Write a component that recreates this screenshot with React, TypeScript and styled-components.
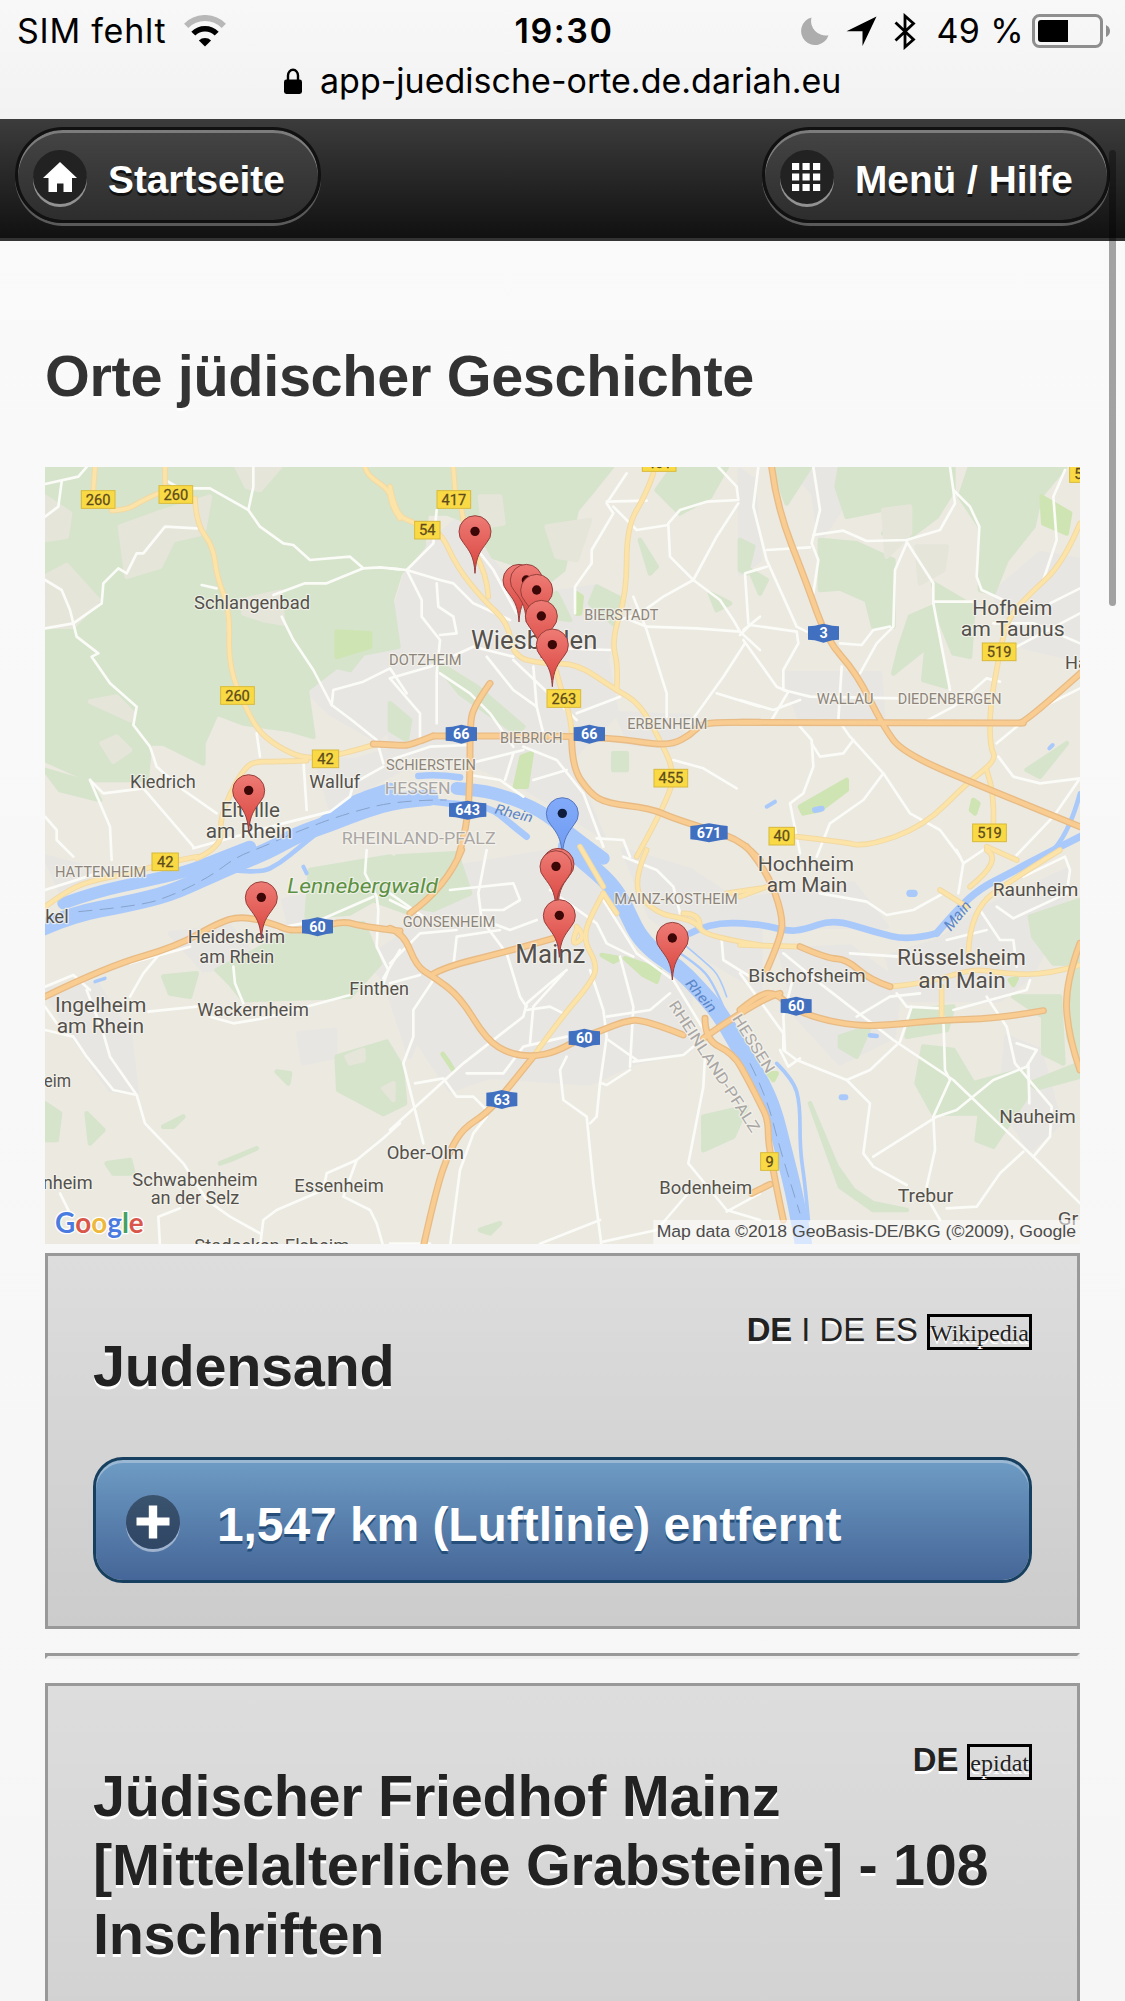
import React from 'react';
import styled, { createGlobalStyle } from 'styled-components';

const Global = createGlobalStyle`
  html, body { margin: 0; padding: 0; background: #f8f8f8; }
  * { box-sizing: border-box; }
`;

const sans = '"Liberation Sans", Arial, Helvetica, sans-serif';
const system = 'Inter, "Liberation Sans", sans-serif';

const Page = styled.div`
  position: relative;
  width: 1125px;
  height: 2001px;
  overflow: hidden;
  background: linear-gradient(#fafafa, #f6f6f6);
  font-family: ${sans};
  color: #222;
`;

/* ---------- browser chrome ---------- */

const Chrome = styled.header`
  height: 119px;
  background: linear-gradient(#f8f8f8, #f2f2f2);
  font-family: ${system};
  color: #000;
  font-size: 34px;
`;

const StatusRow = styled.div`
  display: grid;
  grid-template-columns: 1fr auto 1fr;
  align-items: center;
  height: 62px;
  padding: 0 14px 0 17px;
`;

const StatusGroup = styled.div<{ $end?: boolean }>`
  display: flex;
  align-items: center;
  justify-content: ${p => (p.$end ? 'flex-end' : 'flex-start')};
  white-space: nowrap;
`;

const StatusText = styled.span<{ $bold?: boolean; $spacing?: number; $left?: number }>`
  font-weight: ${p => (p.$bold ? 600 : 400)};
  letter-spacing: ${p => p.$spacing ?? 0}px;
  margin-left: ${p => p.$left ?? 0}px;
  line-height: 62px;
`;

const Glyph = styled.svg<{ $left?: number }>`
  display: block;
  flex: none;
  margin-left: ${p => p.$left ?? 0}px;
`;

const AddressRow = styled.div`
  display: flex;
  align-items: center;
  height: 38px;
  padding-left: 284px;
  white-space: nowrap;
`;

/* ---------- toolbar ---------- */

const Toolbar = styled.nav`
  display: flex;
  justify-content: space-between;
  height: 122px;
  padding: 8px 15px 0;
  background: linear-gradient(#3c3c3c, #111);
  background-clip: padding-box;
  border-bottom: 3px solid #333;
`;

const Pill = styled.a<{ $width: number }>`
  display: flex;
  align-items: center;
  width: ${p => p.$width}px;
  height: 96px;
  padding-left: 15px;
  border: 3px solid #111;
  border-radius: 48px;
  background: linear-gradient(#444, #2d2d2d);
  background-clip: padding-box;
  box-shadow: inset 0 3px 0 #7c7c7c, 0 3px 0 #5a5a5a;
  color: #fff;
  font-weight: bold;
  font-size: 38.8px;
  text-shadow: 0 3px 0 #111;
  white-space: nowrap;
`;

const PillLabel = styled.span`
  margin-left: 21px;
  padding-top: 9px;
`;

const Disc = styled.span<{ $blue?: boolean }>`
  display: flex;
  align-items: center;
  justify-content: center;
  flex: none;
  width: 54px;
  height: 54px;
  margin-top: 4px;
  border-radius: 50%;
  background: ${p => (p.$blue ? 'linear-gradient(#3a536e, #2f4664)' : '#222')};
  box-shadow: 0 3px 0 ${p => (p.$blue ? '#9fb2ce' : '#929292')};
`;

/* ---------- content ---------- */

const Main = styled.main`
  padding: 101px 45px 0;
`;

const Title = styled.h1`
  margin: 0 0 56px;
  font-size: 57.6px;
  line-height: 69px;
  letter-spacing: -0.32px;
  font-weight: bold;
  color: #333;
  text-shadow: 0 3px 0 #fff;
`;

const MapFrame = styled.svg`
  display: block;
  width: 1035px;
  height: 777px;
`;

const Card = styled.section<{ $height?: number }>`
  margin-top: 9px;
  height: ${p => p.$height ?? 376}px;
  padding: 0 45px;
  border: 3px solid #999;
  background: linear-gradient(#ddd, #ccc);
  background-clip: padding-box;
  text-shadow: 0 3px 0 #fff;
`;

const Rule = styled.hr`
  height: 6px;
  margin: 24px 0;
  border-style: solid;
  border-width: 3px;
  border-color: #999 #eee #eee #999;

  & + ${Card} { margin-top: 0; }
`;

const Languages = styled.div`
  float: right;
  display: flex;
  align-items: baseline;
  margin-top: 56px;
  font-size: 32.8px;
  line-height: 36px;
  white-space: pre;
`;

const Source = styled.span`
  margin-left: 9px;
  padding-top: 2px;
  border: 3px solid #000;
  font-family: "Liberation Serif", "Times New Roman", serif;
  font-size: 24px;
  line-height: 28px;
`;

const CardTitle = styled.h2`
  margin: 0;
  padding-top: 76px;
  font-size: 57.6px;
  line-height: 69px;
  letter-spacing: -0.3px;
  font-weight: bold;
`;

const Distance = styled.button`
  display: flex;
  align-items: center;
  width: 100%;
  height: 126px;
  margin: 56px 0 0;
  padding: 0 0 0 30px;
  border: 3px solid #173f5f;
  border-radius: 30px;
  background: linear-gradient(#6e9cc4, #456698);
  background-clip: padding-box;
  box-shadow: inset 0 3px 0 #9ab8d4;
  color: #fff;
  font: bold 48px/56px ${sans};
  letter-spacing: -0.08px;
  text-shadow: 0 3px 0 #254f7a;
  white-space: nowrap;
`;

const DistanceLabel = styled.span`
  margin-left: 37px;
  padding-top: 10px;
`;

const ScrollThumb = styled.div`
  position: absolute;
  top: 150px;
  left: 1109px;
  width: 7px;
  height: 456px;
  border-radius: 4px;
  background: rgba(0, 0, 0, 0.35);
`;

/* ---------- map ---------- */

/* The map is split into six sheets; every feature is placed in the units of its sheet. */
type Sheet = 'A' | 'B' | 'C' | 'D' | 'E' | 'F';
const origin: Record<Sheet, [number, number]> = {
  A: [-45, -21], B: [1035, -21], C: [2085, -21],
  D: [-45, 1149], E: [1035, 1149], F: [2085, 1149],
};
const at = (s: Sheet) => `translate(${origin[s][0]} ${origin[s][1]})`;

type Shapes = Partial<Record<Sheet, string[]>>;

const urban: Shapes = {
  A: ['830,690 930,620 1110,540 1110,780 1040,840 900,760', '860,900 980,900 1110,860 1110,930 900,1040'],
  B: ['60,300 200,180 330,330 480,400 620,380 700,420 650,600 680,760 540,900 640,1130 400,980 220,900 0,880 0,500', '680,760 900,770 850,860 720,850'],
  C: ['0,30 40,60 60,300 0,340', '150,21 290,21 300,150 240,240 220,100', '760,400 900,280 1020,300 1020,600 850,560', '130,640 420,640 430,780 180,780'],
  D: ['45,420 200,400 300,560 320,730 240,720 130,560', '420,250 600,230 700,350 520,360', '760,150 820,140 830,210 780,230', '1010,330 1110,260 1110,440', '805,550 915,540 915,620 820,640', '45,20 200,60 100,140'],
  E: ['150,60 500,0 640,130 730,310 900,420 900,600 730,640 600,700 300,680 180,720 20,480 0,300', '700,0 900,60 1110,200 1110,420 960,330 780,200', '0,440 60,380 120,460 60,620'],
  F: ['0,150 340,100 440,230 0,230', '120,300 330,290 480,400 460,560 300,640 170,500', '440,320 600,270 720,180 980,60 980,180 870,380 780,450 480,450', '800,560 900,600 960,820 870,900 780,760'],
};

const forest: Shapes = {
  A: [
    '45,21 1745,21 1690,90 1640,150 1600,330 1510,400 1480,320 1390,290 1330,190 1250,160 1190,160 1180,260 1110,340 1085,420 1105,560 1000,580 960,630 920,620 830,690 850,830 780,810 640,790 560,760 520,850 520,910 400,850 360,850 350,960 180,960 45,900',
    '45,930 180,970 210,1020 90,990',
  ],
  B: ['440,420 500,400 540,480 470,470', '850,21 1010,21 960,110 870,160 800,90', '620,380 700,420 680,500 600,430', '750,240 800,320 780,340', '130,600 260,680 400,800 380,820 210,700', '960,400 1020,430 980,450', '670,880 710,880 710,930 670,930', '0,730 60,780 50,840 0,810'],
  C: ['100,21 210,21 140,130', '300,21 640,21 640,90 590,170 510,230 430,220 480,150 420,150 320,170 290,80', '690,21 975,21 900,110 880,200 800,300 760,400 720,390 720,200 660,110', '240,240 350,250 460,300 460,500 400,500 380,420 300,385 240,390', '510,470 580,440 620,680 550,660 560,560 460,640 480,560', '580,370 700,440 690,590 640,580 600,480', '0,240 40,260 20,340 0,330', '980,850 900,950 860,930', '30,330 80,360 60,400'],
  D: ['840,60 1080,20 1250,110 1140,190 1030,150 960,190 830,200', '560,360 760,260 1000,220 1050,340 960,440 640,450 600,400', '920,620 1070,575 1115,650 1125,760 1060,792 925,720', '170,790 220,840 180,880', '230,940 300,930 310,970 250,970', '45,760 90,790 80,870 45,870', '570,940 680,895 600,930', '400,830 460,800 430,830', '400,380 500,370 480,440 420,430', '740,665 780,670 775,700'],
  E: ['20,20 200,10 240,130 130,180 20,160', '940,800 1070,770 1030,860 940,900', '270,1140 330,1120 300,1150'],
  F: ['870,200 1020,150 1020,340 940,340 880,260', '1020,330 1020,660 985,560 980,420', '520,480 640,470 620,540 500,560', '550,590 640,600 700,700 850,660 860,740 760,890 710,870 720,790 580,790 530,700', '870,700 1020,640 1020,680 890,715', '820,440 960,440 970,640 910,610 910,500', '300,560 390,530 350,620 300,590', '210,760 290,950 340,1020 400,1060 500,1080 400,1080 300,1010'],
};

const clearing: Shapes = {
  A: ['270,200 380,160 540,110 520,220 430,240 390,320 290,350', '45,350 110,315 205,420 130,500 45,500', '45,110 120,160 110,230 45,240', '620,21 750,21 690,90 650,80', '640,420 750,395 760,490 700,480 640,460', '215,850 260,830 300,870 250,905', '180,725 260,710 310,760 300,780'],
  B: ['270,110 330,110 340,190 280,200', '470,200 600,180 560,300 500,290'],
  C: ['430,150 510,140 510,220 440,290', '530,260 620,260 610,330 540,370'],
  D: ['950,620 1000,600 1000,630 960,640', '1060,715 1090,700 1090,750'],
};

const park: Shapes = {
  A: ['920,515 1020,520 1020,560 920,590'],
  B: ['395,890 425,880 410,980 375,980', '560,400 575,410 570,460 558,460'],
  C: ['905,110 990,160 980,220 910,190', '180,1040 320,960 320,990 240,1050 190,1060', '700,1020 715,1030 705,1060 693,1050'],
  E: ['705,325 810,360 800,395 760,375', '635,315 690,325 670,335', '158,612 175,635 190,660'],
  F: ['85,670 110,670 100,690', '810,390 830,385 820,405'],
};

const water: [Sheet, number, string][] = [
  ['D', 50, '20,240 120,195 300,160 420,130 520,85 600,50 720,0 800,-45 900,-80 1000,-120 1110,-152 1200,-158'],
  ['D', 36, '100,160 200,125 340,95 470,65 570,25 660,-10'],
  ['D', 14, '600,60 690,70 750,40 810,-10 860,-50'],
  ['A', 34, '850,1110 930,1045 1000,1010 1080,985'],
  ['B', 20, '85,948 140,942 210,952'],
  ['B', 20, '-20,1020 90,1020 170,1030 300,1040 360,1090 410,1130'],
  ['B', 38, '200,985 270,990 350,1010 450,1050 540,1120 640,1195'],
  ['E', 52, '530,-10 590,40 660,100 705,170 740,250 790,305 860,350 920,410 990,490 1040,580 1110,690 1150,780 1180,900 1220,1060 1240,1180'],
  ['E', 20, '900,250 960,217 1110,222 1190,243 1240,240 1330,208 1450,245 1560,272 1640,250'],
  ['F', 22, '590,250 650,180 720,115 800,75 930,5 1020,-40'],
  ['C', 14, '930,1180 985,1130 1020,1000'],
  ['E', 7, '870,310 930,350 970,400 1000,470'],
  ['E', 5, '890,290 950,340 990,380 1010,440'],
  ['F', 11, '110,640 160,690 180,760 180,900 195,1000 205,1110'],
  ['C', 12, '80,1040 105,1025'], ['C', 18, '225,1050 245,1046'], ['C', 12, '928,865 938,855'],
  ['F', 22, '510,130 522,130'], ['F', 18, '305,742 316,742'], ['F', 14, '390,556 410,558'],
  ['D', 10, '195,395 225,385'], ['D', 12, '820,50 830,70'],
];

const riverBorder: [Sheet, string][] = [
  ['D', '145,185 330,168 430,135 540,80 620,20 700,-10 800,-55 950,-110 1110,-150 1250,-150'],
  ['F', '30,640 80,740 120,900 180,1090'],
];

const minor: Shapes = {
  A: [
    '45,72 145,50 170,21', '95,65 85,140 45,170', '405,60 450,85 540,85 655,150 690,200 760,250 790,255 840,300 960,290 1000,325 1050,322 1110,328', '670,21 670,80 655,150',
    '500,205 405,200 340,280 320,280 290,340 265,325 220,370 215,430 130,490 45,505', '45,360 95,390 120,450 140,530 205,580 185,590 240,670 320,740 310,795 360,860 380,920 460,990 560,1060',
    '1000,325 890,370 825,370 730,405', '755,470 790,540 850,630 905,735 910,690 1000,665 1080,625 1130,700', '905,735 965,780 1040,840 1060,910', '180,960 220,1000 340,985 490,1160',
    '180,960 240,1100 245,1200', '45,1070 80,1110 80,1140 130,1190', '680,820 690,890', '820,900 830,1050', '490,1165 760,1090 900,1055 960,1010 970,970 1060,920', '590,450 595,520', '515,375 560,385',
  ],
  B: [
    '0,325 50,330 150,360 190,370 250,430 360,480', '50,330 130,250 140,150', '50,330 95,420 95,470 150,540 140,640 140,790', '140,370 145,440 190,470 200,520 150,525', '240,240 310,330 380,460',
    '710,40 650,130 670,160 605,270 605,310 555,380 555,460', '650,125 770,122', '670,140 740,210 835,195 840,290 910,360 990,420 1030,480 1050,515', '835,190 870,150 950,125 1045,120 1040,80 985,21', '1045,130 980,230 910,360 820,410 750,460 690,480',
    '730,410 770,510 830,700 830,770', '720,480 770,500 920,505 1050,515 1110,570', '1060,510 1110,470', '1065,550 1000,650 900,790', '980,700 1110,740', '370,590 250,560 120,620 0,655', '370,600 560,780', '290,590 370,690 440,740',
    '430,620 440,740 460,820', '690,710 560,760', '0,655 90,760 90,850', '850,900 940,925 1040,985', '400,860 500,900 580,1000 640,1160', '620,1135 700,1140 720,1190', '240,945 330,960 400,1010', '345,960 370,880', '430,960 530,930',
    '0,900 120,860 240,855', '240,910 400,870', '150,640 240,700 300,760 370,860', '370,560 660,570',
  ],
  C: [
    '55,21 40,140 80,300 170,500 200,515', '220,21 240,150 215,250 235,300 220,400', '80,270 210,262', '220,225 310,212 380,243 500,240 600,210 645,130 640,90 630,21', '640,90 690,140 718,200 710,350 725,390 790,420', '500,245 580,370 580,430 605,560 630,690',
    '500,250 465,330 460,500 410,550 360,640', '580,425 700,425', '975,30 940,110 950,240 910,360', '1020,385 930,430', '80,320 15,340 25,490', '0,525 30,495 170,515 175,550 130,630 130,690 210,710 480,715', '10,540 110,680 145,695 95,780', '0,720 100,750 180,720',
    '300,550 365,555 400,510 450,500', '305,620 295,780 330,830 430,940 510,1060 600,1110 660,1190', '180,800 215,840 220,920 190,1000 150,1030 180,1180', '215,850 240,890 310,880 340,840', '430,940 370,1020 270,1090 230,1190', '555,785 640,740 700,690 740,655 780,665',
    '770,850 830,800 930,730 1020,685', '775,890 820,950 900,970 1020,955 940,1070 830,1185', '1020,550 880,490 760,490', '1020,460 830,560',
  ],
  D: [
    '45,540 130,560 170,620 250,720 320,735 345,820 460,940 530,1050 600,1100 690,1150', '170,420 220,550 240,620 320,735', '45,410 130,375 180,420', '355,485 500,470', '390,310 340,370 300,440', '610,350 615,400 640,460', '540,500 610,520 700,505 960,435',
    '1010,0 1005,70 1040,140 1045,180 1040,290 1075,360 1060,400', '1030,140 870,210 740,235', '480,290 300,340', '1110,300 1060,385', '1110,820 1060,865 980,930 890,970 880,1020 740,1080 700,1110 690,1190', '980,930 940,1040 1020,1080 1040,1120 1060,1190', '450,1075 385,1100 390,1190', '90,1030 120,1090', '45,470 80,520', '45,120 140,90 200,70',
  ],
  E: [
    '0,400 90,375', '0,340 90,250 200,240', '130,390 70,480 70,560 40,640 100,880', '0,840 220,640 400,500 410,460 480,400 530,360', '410,480 480,470 520,490', '290,0 265,130 275,210 350,310 390,440 410,470', '180,120 370,100 390,150 340,180 275,180', '0,150 60,180',
    '600,360 640,480 650,560 630,700 620,800 600,820', '690,320 730,470 720,650', '530,620 510,660 520,750 590,800 610,1000 635,1190', '730,635 880,615 910,590', '635,700 650,705 720,660', '655,570 740,630', '945,620 940,710 895,940 1010,1080 1110,1110',
    '1010,1085 1110,1030', '640,1175 800,1140 890,1035', '75,700 160,685 200,740 250,740 290,780', '230,670 340,670 400,590 530,560', '290,800 250,850 210,960 180,1190', '450,1181 630,1110', '640,150 740,310 850,390 960,570', '700,20 800,60 850,110 870,190', '995,270 1000,330 1080,380',
    '480,120 620,220 650,280 730,320', '280,210 360,240 440,210', '190,350 200,260 330,240', '420,580 430,470 520,370', '650,500 780,480 840,430', '0,130 100,200', '120,1181 0,1181',
  ],
  F: [
    '130,310 240,400 460,570 640,690 880,920 1020,1060', '0,370 130,550 130,600 170,630 320,690 390,760 370,910 400,950 500,1005', '120,600 145,650 180,625', '320,690 390,660 480,575 515,470', '240,130 380,155 440,195 520,180 610,130', '650,0 670,40 655,130', '670,40 730,0',
    '740,440 800,530 825,640 935,770 930,860 880,920', '610,500 615,660 630,690 580,800 585,900 560,1010', '400,920 590,800 650,780 760,690 860,650 890,600 830,580', '865,640 868,760', '850,905 780,970 710,1070 620,1075', '560,1040 600,1110', '330,310 480,320', '350,500 450,440 540,430',
    '470,430 500,470 600,475', '720,180 780,270 820,270 830,350', '770,170 820,205 980,130 990,60 975,20 850,80', '620,270 740,240', '640,480 860,420 870,390', '160,380 130,500 135,600',
  ],
};

const yellow: Shapes = {
  A: ['195,21 190,90', '245,152 290,150 340,120 385,100', '405,21 405,70', '495,115 498,190 550,260 560,350 600,450 595,620 650,750 690,820 760,870 830,897 930,885 1030,855', '830,902 740,905 670,905 640,930 600,1000 570,1080 575,1160 500,1195', '1005,21 1010,45 1080,90 1085,140 1110,175'],
  B: ['0,80 15,160 70,190 150,210 200,320 280,420 355,490 370,590 460,612 560,610 670,685 750,730 820,860 850,930 840,1010 740,1190', '190,21 195,90', '215,150 225,230 290,340 295,410', '790,40 770,100 710,200 710,400 665,540 685,620 680,690', '490,600 510,680 545,780 545,830'],
  C: ['1020,190 970,310 860,410 800,480 775,600 750,740 750,860 770,900 680,970 550,1100 380,1160 300,1145 170,1130', '740,930 765,1000 760,1100', '740,1160 830,1200'],
  D: ['500,20 420,35 300,70 170,95 100,130 45,170'],
  E: ['770,0 720,110 800,190 880,205 920,220 950,260 1110,285', '640,130 600,200 580,270 620,340 610,390 500,520 430,620', '570,-10 640,110', '640,130 680,190', '560,230 590,260 540,290 560,240', '1010,130 1110,115', '880,190 930,190 930,230'],
  F: ['0,285 180,290', '450,410 560,400 700,355 780,370 920,375 1020,345', '605,410 605,510', '685,310 690,180 830,80 960,0', '600,120 680,170', '690,110 790,30 740,0', '0,140 80,110'],
};

const motorway: Shapes = {
  A: ['1030,852 1110,856 1140,856 1210,828'],
  B: ['130,828 240,828 550,828 700,838 790,852 850,852 900,825 930,795 980,786 1110,787', '300,670 250,740 240,800 240,950 232,1100 205,1190', '545,830 545,920 600,1000 650,1030 780,1045 850,1075 960,1110 1060,1145 1110,1200'],
  C: ['0,787 850,789', '840,789 862,782 1030,632', '95,21 110,140 200,370 260,540 350,640 430,800 490,880 750,990 1020,1100'],
  D: ['45,440 230,350 440,290 580,210 650,200 740,225 780,243 860,235 940,213 1000,230 1110,243'],
  E: ['215,0 170,110 60,190', '0,235 40,250 80,350 130,380 210,440 290,570 360,612 430,620 500,605 580,560 640,540 700,515 760,507 880,555', '125,375 160,352 350,305 490,265', '430,620 350,720 290,790 220,835 180,900 140,1010 100,1190', '945,505 945,570 1030,610 1075,690 1110,760 1135,810 1135,900 1180,1110', '940,565 1110,445 1170,430', '1085,1030 1140,1003'],
  F: ['0,480 60,430 110,430 150,470 230,505 350,528 450,525 600,510 780,505 910,482', '20,-10 80,60 130,200 120,270 80,360', '1020,280 975,400 985,560 1020,660', '180,290 260,325 320,328 390,390 450,410'],
};

type Kind = 'town' | 'district' | 'state' | 'river' | 'forest';
const kinds: Record<Kind, { fill: string; italic?: boolean }> = {
  town: { fill: '#54514d' },
  district: { fill: '#8d857a' },
  state: { fill: '#a9a6a4' },
  river: { fill: '#5b86c8', italic: true },
  forest: { fill: '#5c9143', italic: true },
};

/* sheet, text, left, baseline, width, size, kind, rotation */
const labels: [Sheet, string, number, number, number, number, Kind, number?][] = [
  ['A', 'Schlangenbad', 492, 448, 348, 56, 'town'], ['A', 'Kiedrich', 300, 983, 197, 56, 'town'], ['A', 'Walluf', 838, 983, 152, 56, 'town'],
  ['A', 'Eltville', 572, 1072, 178, 60, 'town'], ['A', 'am Rhein', 527, 1134, 260, 58, 'town'], ['A', 'RHEINLAND-PFALZ', 935, 1152, 462, 48, 'state'],
  ['B', 'Wiesbaden', 243, 567, 379, 76, 'town'], ['B', 'BIERSTADT', 583, 479, 222, 44, 'district'], ['B', 'DOTZHEIM', -3, 615, 218, 44, 'district'],
  ['B', 'BIEBRICH', 330, 848, 188, 44, 'district'], ['B', 'ERBENHEIM', 712, 808, 240, 44, 'district'], ['B', 'SCHIERSTEIN', -12, 930, 270, 44, 'district'],
  ['B', 'HESSEN', -16, 1001, 198, 48, 'state'], ['B', 'Rhein', 312, 1060, 116, 42, 'river', 14],
  ['C', 'Hofheim', 697, 464, 240, 60, 'town'], ['C', 'am Taunus', 662, 528, 312, 60, 'town'], ['C', 'WALLAU', 230, 733, 170, 44, 'district'],
  ['C', 'DIEDENBERGEN', 473, 731, 312, 44, 'district'], ['C', 'Hattersheim', 975, 628, 300, 56, 'town'],
  ['D', 'HATTENHEIM', 75, 80, 274, 44, 'district'], ['D', 'Winkel', -48, 220, 164, 54, 'town'], ['D', 'Lennebergwald', 772, 128, 452, 62, 'forest'],
  ['D', 'Heidesheim', 473, 280, 292, 54, 'town'], ['D', 'am Rhein', 508, 338, 225, 54, 'town'], ['D', 'Ingelheim', 75, 486, 274, 62, 'town'], ['D', 'am Rhein', 80, 549, 262, 60, 'town'],
  ['D', 'Finthen', 958, 434, 179, 56, 'town'], ['D', 'Wackernheim', 502, 498, 335, 56, 'town'], ['D', 'heim', 15, 711, 108, 56, 'town'], ['D', 'nheim', 38, 1017, 150, 56, 'town'],
  ['D', 'Schwabenheim', 307, 1007, 376, 56, 'town'], ['D', 'an der Selz', 362, 1061, 266, 56, 'town'], ['D', 'Essenheim', 793, 1026, 268, 56, 'town'], ['D', 'Stadecken-Elsheim', 493, 1205, 465, 56, 'town'],
  ['E', 'GONSENHEIM', 38, 232, 278, 44, 'district'], ['E', 'Mainz', 376, 338, 210, 76, 'town'], ['E', 'MAINZ-KOSTHEIM', 673, 163, 370, 44, 'district'],
  ['E', 'Ober-Olm', -10, 928, 232, 56, 'town'], ['E', 'Bodenheim', 808, 1032, 278, 56, 'town'], ['E', 'Rhein', 884, 402, 118, 42, 'river', 49],
  ['E', 'RHEINLAND-PFALZ', 835, 465, 460, 46, 'state', 57], ['E', 'HESSEN', 1025, 505, 198, 46, 'state', 58],
  ['F', 'Hochheim', 53, 63, 289, 62, 'town'], ['F', 'am Main', 80, 125, 242, 60, 'town'], ['F', 'Raunheim', 758, 138, 257, 56, 'town'], ['F', 'Rüsselsheim', 471, 346, 387, 64, 'town'],
  ['F', 'am Main', 535, 415, 262, 64, 'town'], ['F', 'Bischofsheim', 25, 395, 352, 56, 'town'], ['F', 'Nauheim', 778, 820, 229, 56, 'town'], ['F', 'Trebur', 473, 1057, 167, 56, 'town'],
  ['F', 'Gr', 953, 1124, 62, 56, 'town'], ['F', 'Main', 632, 245, 100, 46, 'river', -50],
];

/* sheet, text, left, top, width */
const federal: [Sheet, string, number, number, number][] = [
  ['A', '260', 152, 90, 105], ['A', '260', 385, 75, 105], ['A', '260', 570, 678, 105], ['A', '42', 845, 868, 83], ['D', '42', 364, 7, 83],
  ['B', '417', 139, 90, 105], ['B', '54', 72, 182, 80], ['B', '263', 469, 687, 105], ['B', '455', 790, 926, 105], ['B', '461', 755, -21, 105],
  ['C', '519', 725, 547, 105], ['C', '519', 696, 1090, 105], ['C', '40', 85, 1100, 80], ['C', '519', 987, 12, 105], ['F', '9', 60, 906, 57],
];
const autobahn: [Sheet, string, number, number, number][] = [
  ['B', '66', 167, 794, 94], ['B', '66', 551, 794, 94], ['B', '643', 177, 1022, 112], ['B', '671', 901, 1090, 112], ['C', '3', 204, 491, 93],
  ['D', '60', 816, 202, 93], ['E', '60', 536, 536, 94], ['E', '63', 289, 720, 93], ['F', '60', 122, 440, 93],
];

/* sheet, head centre x, head centre y, blue */
const pins: [Sheet, number, number, boolean?][] = [
  ['B', 255, 214], ['B', 387, 360], ['B', 409, 360], ['B', 440, 390], ['B', 454, 468], ['B', 487, 554],
  ['A', 656, 991], ['D', 694, 142], ['B', 517, 1060, true], ['E', 504, 42], ['E', 498, 49], ['E', 508, 196], ['E', 847, 264],
];

const Areas = ({ shapes, fill }: { shapes: Shapes; fill: string }) => (
  <g fill={fill} stroke={fill} strokeWidth={14} strokeLinejoin="round">
    {(Object.keys(shapes) as Sheet[]).map(s => (
      <g key={s} transform={at(s)}>{shapes[s]!.map((p, i) => <polygon key={i} points={p} />)}</g>
    ))}
  </g>
);

/* Turns a list of points into a softly curved path through the segment midpoints. */
const curve = (points: string) => {
  const p = points.split(' ').map(q => q.split(',').map(Number));
  if (p.length < 3) return `M${p.map(q => q.join(' ')).join('L')}`;
  let d = `M${p[0].join(' ')}`;
  for (let i = 1; i < p.length - 1; i++) {
    const [x, y] = p[i];
    const [nx, ny] = p[i + 1];
    const end = i === p.length - 2 ? `${nx} ${ny}` : `${(x + nx) / 2} ${(y + ny) / 2}`;
    d += `Q${x} ${y} ${end}`;
  }
  return d;
};

const Roads = ({ shapes, color, width, smooth }: { shapes: Shapes; color: string; width: number; smooth?: boolean }) => (
  <g fill="none" stroke={color} strokeWidth={width} strokeLinejoin="round" strokeLinecap="round">
    {(Object.keys(shapes) as Sheet[]).map(s => (
      <g key={s} transform={at(s)}>
        {shapes[s]!.map((p, i) => (smooth ? <path key={i} d={curve(p)} /> : <polyline key={i} points={p} />))}
      </g>
    ))}
  </g>
);

const PlaceMap = () => (
  <MapFrame viewBox="0 0 3105 2331" preserveAspectRatio="none" fontFamily="Roboto, sans-serif">
    <defs>
      <linearGradient id="pinRed" x1="0" y1="0" x2="0" y2="1">
        <stop offset="0" stopColor="#ee7b75" /><stop offset="1" stopColor="#d9433d" />
      </linearGradient>
      <linearGradient id="pinBlue" x1="0" y1="0" x2="0" y2="1">
        <stop offset="0" stopColor="#82aafa" /><stop offset="1" stopColor="#6f9bf0" />
      </linearGradient>
    </defs>
    <rect width="3105" height="2331" fill="#ebe9e0" />
    <Areas shapes={urban} fill="#e8e6e2" />
    <Areas shapes={forest} fill="#d5e4cb" />
    <Areas shapes={clearing} fill="#e6e5da" />
    <Areas shapes={park} fill="#cfe4b3" />
    <g fill="none" stroke="#a9c9fb" strokeLinecap="round" strokeLinejoin="round">
      {water.map(([s, w, p], i) => <path key={i} transform={at(s)} strokeWidth={w} d={curve(p)} />)}
    </g>
    <g fill="none" stroke="#86a3cb" strokeWidth={3} strokeDasharray="42 22">
      {riverBorder.map(([s, p], i) => <path key={i} transform={at(s)} d={curve(p)} />)}
    </g>
    <Roads shapes={minor} color="#fbfbf8" width={8} />
    <Roads shapes={yellow} color="#f2d9a4" width={17} smooth />
    <Roads shapes={yellow} color="#fce4a8" width={11} smooth />
    <Roads shapes={motorway} color="#e8bb85" width={21} smooth />
    <Roads shapes={motorway} color="#f9cd92" width={13} smooth />
    {federal.map(([s, t, x, y, w], i) => (
      <g key={i} transform={at(s)}>
        <rect x={x + 2} y={y + 2} width={w - 4} height={53} fill="#f9da45" stroke="#d9b93a" strokeWidth={3} />
        <text x={x + w / 2} y={y + 44} textAnchor="middle" fontSize={44} fontWeight={400} stroke="#5e4c1c" strokeWidth={0.8} fill="#5e4c1c">{t}</text>
      </g>
    ))}
    {autobahn.map(([s, t, x, y, w], i) => (
      <g key={i} transform={at(s)}>
        <path d={`M${x} ${y + 8}L${x + 20} ${y + 6}L${x + w / 2} ${y}L${x + w - 20} ${y + 6}L${x + w} ${y + 8}V${y + 48}L${x + w - 20} ${y + 50}L${x + w / 2} ${y + 57}L${x + 20} ${y + 50}L${x} ${y + 48}Z`} fill="#4170c0" />
        <text x={x + w / 2} y={y + 44} textAnchor="middle" fontSize={43} fontWeight={700} fill="#fff">{t}</text>
      </g>
    ))}
    {labels.map(([s, t, x, y, w, size, kind, turn], i) => (
      <g key={i} transform={`${at(s)} translate(${x} ${y}) rotate(${turn ?? 0})`}>
        <text
          textLength={w} lengthAdjust="spacingAndGlyphs" fontSize={size} fill={kinds[kind].fill}
          fontStyle={kinds[kind].italic ? 'italic' : 'normal'} stroke="#f6f4ee" strokeOpacity={0.75}
          strokeWidth={kind === 'river' ? 0 : 7} strokeLinejoin="round" paintOrder="stroke"
        >{t}</text>
      </g>
    ))}
    {pins.map(([s, x, y, blue], i) => (
      <g key={i} transform={`${at(s)} translate(${x} ${y})`}>
        <path d="M0 126C-3 72 -18 58 -35 34A48 48 0 1 1 35 34C18 58 3 72 0 126Z" fill={blue ? 'url(#pinBlue)' : 'url(#pinRed)'} stroke={blue ? '#5677bd' : '#96403c'} strokeWidth={3} strokeLinejoin="round" />
        <circle r={14} fill={blue ? '#101c3c' : '#3c0707'} />
      </g>
    ))}
    <rect x="1825" y="2259" width="1280" height="72" fill="#fff" fillOpacity={0.55} />
    <text x="1835" y="2309" textLength={1258} lengthAdjust="spacingAndGlyphs" fontFamily="Liberation Sans, Arial, sans-serif" fontSize={50} fill="#4c4c4c">
      Map data ©2018 GeoBasis-DE/BKG (©2009), Google
    </text>
    <text x="30" y="2297" textLength={266} lengthAdjust="spacingAndGlyphs" fontFamily="Lato, sans-serif" fontWeight={700} fontSize={88} stroke="#fff" strokeWidth={8} paintOrder="stroke">
      <tspan fill="#4a7be0">G</tspan><tspan fill="#d8574a">o</tspan><tspan fill="#edb83c">o</tspan><tspan fill="#4a7be0">g</tspan><tspan fill="#47a05c">l</tspan><tspan fill="#d8574a">e</tspan>
    </text>
  </MapFrame>
);

/* ---------- icons ---------- */

const Wifi = () => (
  <Glyph $left={18} width="42" height="32" viewBox="0 0 42 32">
    <path d="M2.2 10.8A26.5 26.5 0 0 1 39.8 10.8" fill="none" stroke="#b8b8b8" strokeWidth="6" />
    <path d="M9.3 18.6A16.5 16.5 0 0 1 32.7 18.6" fill="none" stroke="#000" strokeWidth="5.6" />
    <path d="M21 31.5L14.9 25.4A8.8 8.8 0 0 1 27.1 25.4Z" />
  </Glyph>
);
const Moon = () => (
  <Glyph width="28" height="28" viewBox="0 0 28 28">
    <path d="M10.5 0.5A14 14 0 1 0 27.5 18.2A14.5 14.5 0 0 1 10.5 0.5Z" fill="#adadad" />
  </Glyph>
);
const Arrow = () => (
  <Glyph $left={17} width="31" height="31" viewBox="0 0 31 31"><path d="M30.5 0.5L16.5 30V15.3H0.5Z" /></Glyph>
);
const Bluetooth = () => (
  <Glyph $left={17} width="22" height="37" viewBox="0 0 22 37">
    <path d="M1.5 9.5L19.5 26.5L11 34V3L19.5 10.5L1.5 27.5" fill="none" stroke="#000" strokeWidth="2.8" />
  </Glyph>
);
const Battery = () => (
  <Glyph $left={8} width="79" height="34" viewBox="0 0 79 34">
    <rect x="1.5" y="1.5" width="68" height="31" rx="6" fill="none" stroke="#8e8e8e" strokeWidth="3" />
    <path d="M9 6H36V28H9Q6 28 6 25V9Q6 6 9 6Z" />
    <path d="M74 11Q78 13 78 17T74 23Z" fill="#8e8e8e" />
  </Glyph>
);
const Lock = () => (
  <Glyph width="18" height="26" viewBox="0 0 18 26">
    <path d="M4 13V7.5A5 5.7 0 0 1 14 7.5V13" fill="none" stroke="#000" strokeWidth="2.4" />
    <rect x="0" y="11.5" width="18" height="14.5" rx="2.4" />
  </Glyph>
);
const Home = () => (
  <Glyph width="34" height="30" viewBox="0 0 34 30">
    <path d="M17 0L34 16H29V30H20.5V21.5H14V30H5.5V16H0Z" fill="#fff" />
  </Glyph>
);
const Grid = () => (
  <Glyph width="30" height="28" viewBox="0 0 30 28">
    {[0, 10.5, 21].map(y => [0, 10.5, 21].map(x => <rect key={`${x}-${y}`} x={x} y={y} width="7.2" height="7" fill="#fff" />))}
  </Glyph>
);
const Plus = () => (
  <Glyph width="34" height="34" viewBox="0 0 34 34"><path d="M12.8 0.5H21.2V12.5H33.5V20.5H21.2V33.5H12.8V20.5H0.5V12.5H12.8Z" fill="#fff" /></Glyph>
);

export default function App() {
  return (
    <Page>
      <Global />
      <Chrome>
        <StatusRow>
          <StatusGroup><StatusText $spacing={0.75}>SIM fehlt</StatusText><Wifi /></StatusGroup>
          <StatusText $bold $spacing={1.6}>19:30</StatusText>
          <StatusGroup $end>
            <Moon /><Arrow /><Bluetooth />
            <StatusText $left={20} $spacing={0.4}>49 %</StatusText>
            <Battery />
          </StatusGroup>
        </StatusRow>
        <AddressRow><Lock /><StatusText $left={18}>app-juedische-orte.de.dariah.eu</StatusText></AddressRow>
      </Chrome>
      <Toolbar>
        <Pill $width={306}><Disc><Home /></Disc><PillLabel>Startseite</PillLabel></Pill>
        <Pill $width={348}><Disc><Grid /></Disc><PillLabel>Menü / Hilfe</PillLabel></Pill>
      </Toolbar>
      <Main>
        <Title>Orte jüdischer Geschichte</Title>
        <PlaceMap />
        <Card>
          <Languages><b>DE</b> I DE ES<Source>Wikipedia</Source></Languages>
          <CardTitle>Judensand</CardTitle>
          <Distance><Disc $blue><Plus /></Disc><DistanceLabel>1,547 km (Luftlinie) entfernt</DistanceLabel></Distance>
        </Card>
        <Rule />
        <Card $height={514}>
          <Languages><b>DE</b><Source>epidat</Source></Languages>
          <CardTitle>Jüdischer Friedhof Mainz [Mittelalterliche Grabsteine] - 108 Inschriften</CardTitle>
        </Card>
      </Main>
      <ScrollThumb />
    </Page>
  );
}
